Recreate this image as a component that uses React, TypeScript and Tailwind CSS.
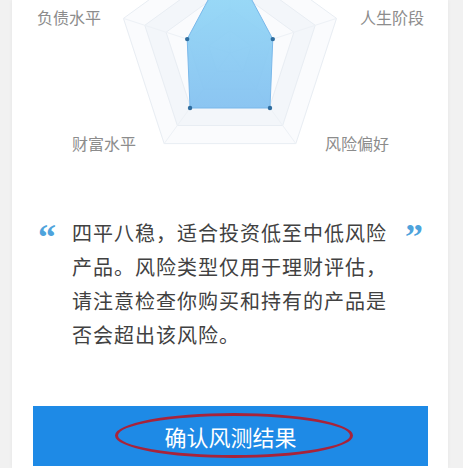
import React from "react";

const CX = 230;
const CY = 53;
const R = 112;

function point(index: number, radius: number) {
  const angle = (-90 + index * 72) * (Math.PI / 180);
  return [CX + radius * Math.cos(angle), CY + radius * Math.sin(angle)];
}

function ring(radius: number) {
  return [0, 1, 2, 3, 4].map((i) => point(i, radius).join(",")).join(" ");
}

// top, right, bottom-right, bottom-left, left
const scores = [94, 45, 68, 68, 45];

const labels = [
  { text: "负债水平", x: 37, y: 24 },
  { text: "人生阶段", x: 360, y: 24 },
  { text: "财富水平", x: 72, y: 150 },
  { text: "风险偏好", x: 325, y: 150 },
];

function RadarChart() {
  const levels = [1, 0.8, 0.6, 0.4, 0.2];
  const dataPoints = scores.map((s, i) => point(i, s));

  return (
    <svg viewBox="12 0 436 175" className="block h-[175px] w-[436px]">
      <defs>
        <linearGradient id="area" x1="0" y1="-41" x2="0" y2="108" gradientUnits="userSpaceOnUse">
          <stop offset="0" stopColor="#93dcf8" />
          <stop offset="1" stopColor="#7fbff0" />
        </linearGradient>
      </defs>
      {levels.map((l, i) => (
        <polygon
          key={l}
          points={ring(R * l)}
          fill={i % 2 === 0 ? "#fafbfd" : "#f3f6fa"}
          stroke="#e8edf3"
          strokeWidth="1"
        />
      ))}
      {[0, 1, 2, 3, 4].map((i) => {
        const [x, y] = point(i, R);
        return <line key={i} x1={CX} y1={CY} x2={x} y2={y} stroke="#edf1f6" strokeWidth="1" />;
      })}
      <polygon
        points={dataPoints.map((p) => p.join(",")).join(" ")}
        fill="url(#area)"
        fillOpacity="0.9"
        stroke="#7ab8ea"
        strokeWidth="1"
      />
      {dataPoints.map(([x, y], i) => (
        <circle key={i} cx={x} cy={y} r="2.2" fill="#2f6d9f" />
      ))}
      {labels.map((l) => (
        <text
          key={l.text}
          x={l.x}
          y={l.y}
          fontSize="16"
          fill="#8c8c8c"
          fontFamily="'Noto Sans CJK SC', sans-serif"
        >
          {l.text}
        </text>
      ))}
    </svg>
  );
}

export default function App() {
  return (
    <div
      className="h-[468px] w-[463px] overflow-hidden bg-[#f1f1f1]"
      style={{ fontFamily: "'Noto Sans CJK SC', 'Noto Sans', sans-serif" }}
    >
      <div className="ml-[12px] h-[468px] w-[436px] bg-white shadow-[0_0_4px_rgba(0,0,0,0.05)]">
        <RadarChart />

        <div className="mt-[41px] flex items-start pl-[26px]">
          <span className="mt-[3px] w-[34px] font-['Liberation_Serif',serif] text-[36px] font-bold leading-none text-[#4ea3dc]">
            “
          </span>
          <p className="w-[318px] text-[20px] leading-[34px] tracking-[1px] text-[#414141]">
            四平八稳，适合投资低至中低风险产品。风险类型仅用于理财评估，请注意检查你购买和持有的产品是否会超出该风险。
          </p>
          <span className="ml-[15px] mt-[3px] font-['Liberation_Serif',serif] text-[36px] font-bold leading-none text-[#4ea3dc]">
            ”
          </span>
        </div>

        <button className="relative mx-[21px] mt-[54px] flex h-[60px] w-[395px] items-center justify-center bg-[#1e8ae6] text-[22px] text-white">
          确认风测结果
          <span className="absolute left-[82px] top-[7px] h-[45px] w-[238px] rounded-[50%] border-[3px] border-[#a8233a]" />
        </button>
      </div>
    </div>
  );
}
